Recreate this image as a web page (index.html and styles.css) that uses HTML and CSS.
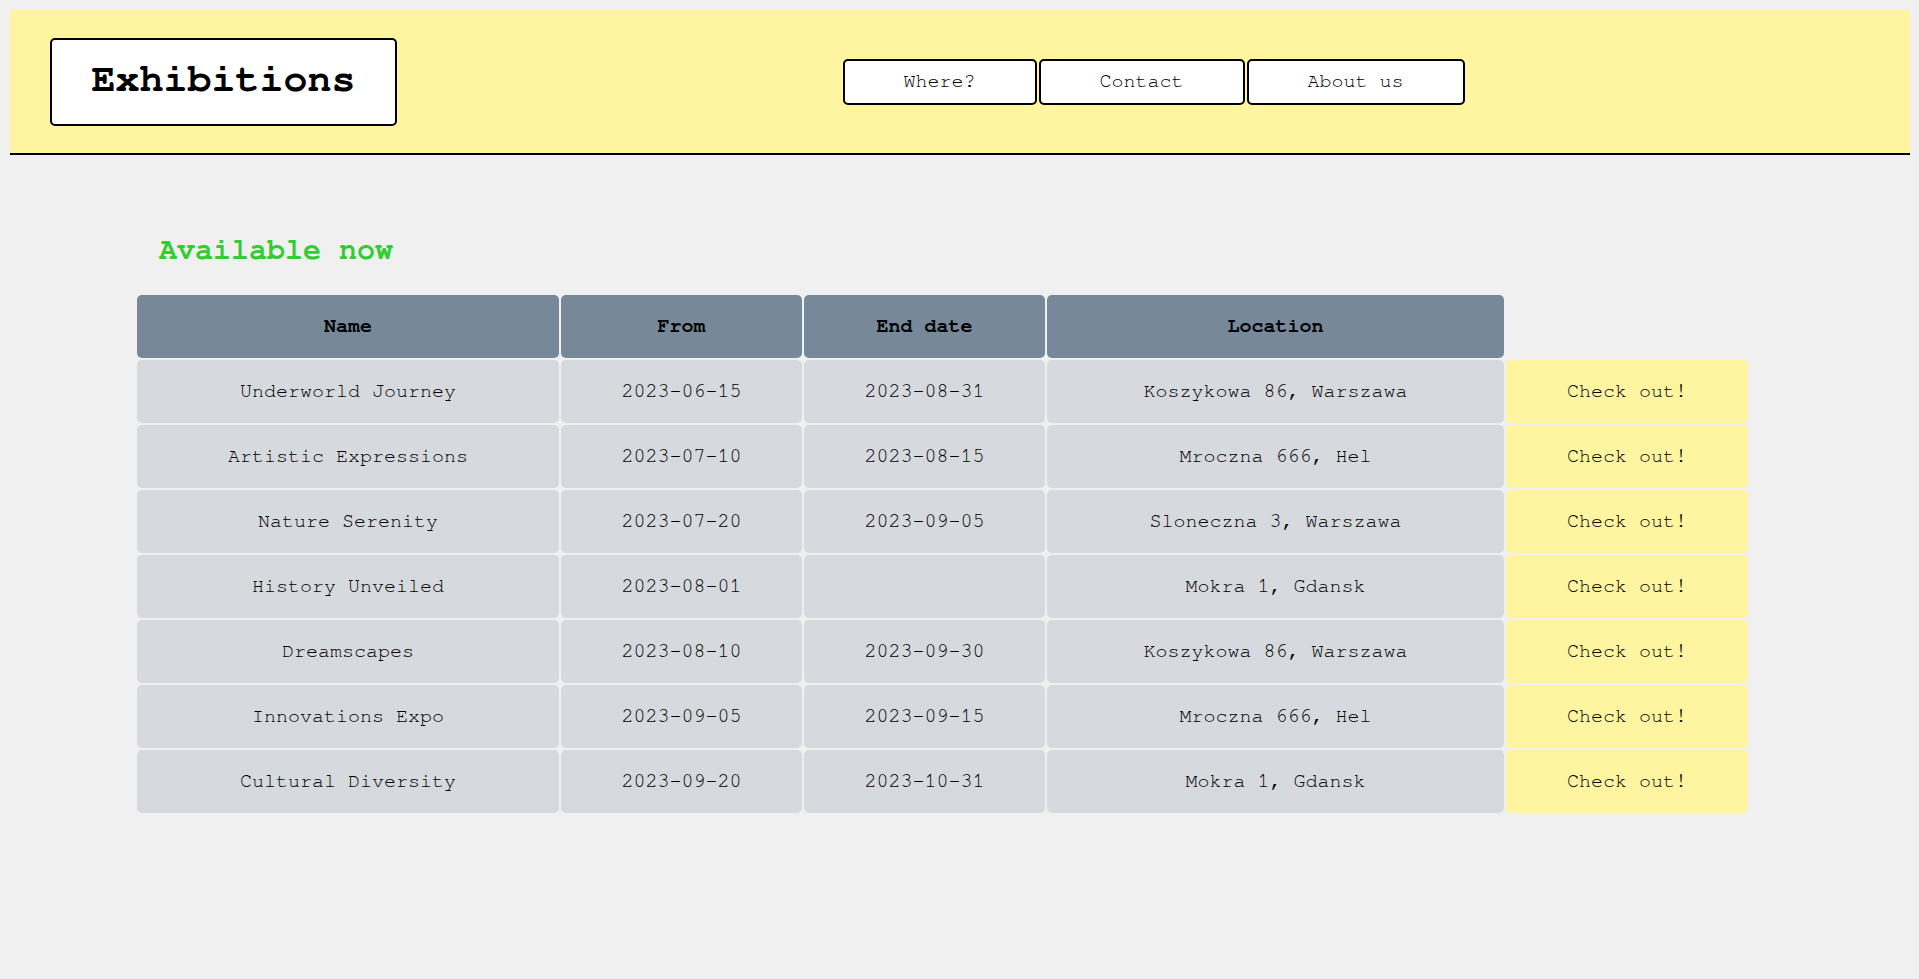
FILE: index.html
```html
<!DOCTYPE html>
<html lang="en">
<head>
<meta charset="utf-8">
<title>Exhibitions</title>
<link rel="stylesheet" href="styles.css">
</head>
<body>
<header class="site-header">
  <div class="logo">Exhibitions</div>
  <nav class="nav">
    <a class="nav-btn nav-where" href="#">Where?</a>
    <a class="nav-btn" href="#">Contact</a>
    <a class="nav-btn" href="#">About us</a>
  </nav>
</header>
<main class="content">
  <h2 class="section-title">Available now</h2>
  <table class="exhibitions">
    <colgroup>
      <col class="c-name"><col class="c-date"><col class="c-date"><col class="c-loc"><col class="c-check">
    </colgroup>
    <thead>
      <tr><th>Name</th><th>From</th><th>End date</th><th>Location</th><th class="blank"></th></tr>
    </thead>
    <tbody>
      <tr><td>Underworld Journey</td><td>2023-06-15</td><td>2023-08-31</td><td>Koszykowa 86, Warszawa</td><td class="check">Check out!</td></tr>
      <tr><td>Artistic Expressions</td><td>2023-07-10</td><td>2023-08-15</td><td>Mroczna 666, Hel</td><td class="check">Check out!</td></tr>
      <tr><td>Nature Serenity</td><td>2023-07-20</td><td>2023-09-05</td><td>Sloneczna 3, Warszawa</td><td class="check">Check out!</td></tr>
      <tr><td>History Unveiled</td><td>2023-08-01</td><td></td><td>Mokra 1, Gdansk</td><td class="check">Check out!</td></tr>
      <tr><td>Dreamscapes</td><td>2023-08-10</td><td>2023-09-30</td><td>Koszykowa 86, Warszawa</td><td class="check">Check out!</td></tr>
      <tr><td>Innovations Expo</td><td>2023-09-05</td><td>2023-09-15</td><td>Mroczna 666, Hel</td><td class="check">Check out!</td></tr>
      <tr><td>Cultural Diversity</td><td>2023-09-20</td><td>2023-10-31</td><td>Mokra 1, Gdansk</td><td class="check">Check out!</td></tr>
    </tbody>
  </table>
</main>
</body>
</html>
```
FILE: styles.css
```css
html, body {
  background: #f0f0f0;
}
body {
  margin: 10px 9px 10px 10px;
  font-family: "Nimbus Mono PS", "FreeMono", "Liberation Mono", "Courier New", monospace;
  font-size: 20px;
  color: #000;
}
.site-header {
  display: flex;
  align-items: center;
  height: 143px;
  padding-left: 40px;
  background: #fff5a0;
  border-bottom: 2px solid #000;
}
.logo {
  box-sizing: border-box;
  width: 347px;
  height: 88px;
  padding-bottom: 5px;
  display: flex;
  align-items: center;
  justify-content: center;
  background: #fff;
  border: 2px solid #000;
  border-radius: 5px;
  font-size: 40px;
  font-weight: bold;
  color: #000;
}
.nav {
  flex: 1;
  display: flex;
  justify-content: center;
  gap: 2px;
}
.nav-btn {
  box-sizing: border-box;
  display: flex;
  align-items: center;
  justify-content: center;
  height: 46px;
  padding: 0 59px 2px;
  background: #fff;
  border: 2px solid #000;
  border-radius: 5px;
  color: #000;
  text-decoration: none;
  font-size: 20px;
}
.content {
  padding: 78px 0 0 125px;
}
.section-title {
  margin: 0 0 26px 24px;
  font-size: 30px;
  font-weight: bold;
  line-height: 34px;
  color: #32cd32;
}
.exhibitions {
  border-collapse: separate;
  border-spacing: 2px;
  table-layout: fixed;
  width: 1615px;
}
.c-name { width: 422px; }
.c-date { width: 241px; }
.c-loc { width: 457px; }
.c-check { width: 242px; }
.exhibitions th,
.exhibitions td {
  box-sizing: border-box;
  height: 63px;
  padding: 0 0 2px;
  text-align: center;
  vertical-align: middle;
  border-radius: 5px;
  font-size: 20px;
}
.exhibitions th {
  background: #778899;
  font-weight: bold;
  color: #000;
}
.exhibitions th.blank {
  background: transparent;
}
.exhibitions td {
  background: #d6d9dd;
  color: #000;
}
.exhibitions td.check {
  background: #fff5a0;
}
```
